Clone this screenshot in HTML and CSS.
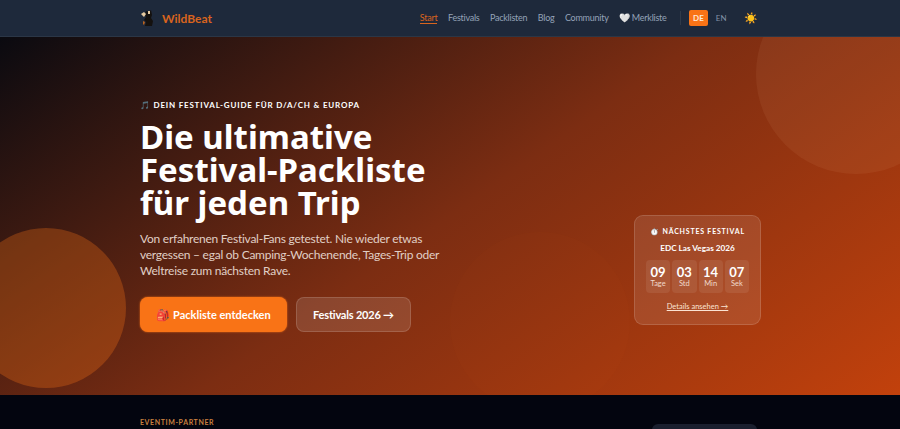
FILE: index.html
```html
<!DOCTYPE html>
<html lang="de">
<head>
  <meta charset="UTF-8">
  <meta name="viewport" content="width=device-width, initial-scale=1.0">
  <title>WildBeat</title>
  <link rel="stylesheet" href="styles.css">
</head>
<body>
  <header class="topbar">
    <div class="wrap topbar-inner">
      <a class="brand" href="#">
        <svg class="brand-logo" width="16" height="18" viewBox="0 0 16 18">
          <path d="M6 2l3 1 2-2 1 5-1 3 2 3-1 5H5l1-4-2-2 2-3-1-3z" fill="#14110f"/>
          <path d="M1 5l3-2 2 2-2 3zM8 2l2 0 0 3-2 0z" fill="#e6c9a0"/>
          <path d="M3 12l2 1-1 3-1-1z" fill="#b8621f"/>
        </svg>
        <span>WildBeat</span>
      </a>
      <nav class="nav">
        <a class="nav-link is-active" href="#">Start</a>
        <a class="nav-link" href="#">Festivals</a>
        <a class="nav-link" href="#">Packlisten</a>
        <a class="nav-link" href="#">Blog</a>
        <a class="nav-link" href="#">Community</a>
        <a class="nav-link" href="#"><span class="nav-emoji">🤍</span> Merkliste</a>
      </nav>
      <div class="topbar-sep"></div>
      <div class="lang">
        <span class="lang-btn is-on">DE</span>
        <span class="lang-btn">EN</span>
      </div>
      <span class="theme">☀️</span>
    </div>
  </header>

  <section class="hero">
    <div class="blob blob-right"></div>
    <div class="blob blob-left"></div>
    <div class="blob blob-mid"></div>
    <div class="wrap hero-inner">
      <div class="hero-copy">
        <p class="eyebrow">🎵 DEIN FESTIVAL-GUIDE FÜR D/A/CH &amp; EUROPA</p>
        <h1>Die ultimative Festival-Packliste für jeden Trip</h1>
        <p class="lead">Von erfahrenen Festival-Fans getestet. Nie wieder etwas vergessen – egal ob Camping-Wochenende, Tages-Trip oder Weltreise zum nächsten Rave.</p>
        <div class="hero-actions">
          <a class="btn btn-primary" href="#">🎒 Packliste entdecken</a>
          <a class="btn btn-ghost" href="#">Festivals 2026 →</a>
        </div>
      </div>
      <aside class="countdown">
        <div class="countdown-label">⏱️ NÄCHSTES FESTIVAL</div>
        <div class="countdown-name">EDC Las Vegas 2026</div>
        <div class="countdown-grid">
          <div class="cell"><b>09</b><span>Tage</span></div>
          <div class="cell"><b>03</b><span>Std</span></div>
          <div class="cell"><b>14</b><span>Min</span></div>
          <div class="cell"><b>07</b><span>Sek</span></div>
        </div>
        <a class="countdown-link" href="#">Details ansehen →</a>
      </aside>
    </div>
  </section>

  <section class="partner">
    <div class="wrap partner-inner">
      <p class="partner-label">EVENTIM-PARTNER</p>
      <div class="partner-card"></div>
    </div>
  </section>
</body>
</html>
```

FILE: styles.css
```css
* {
  box-sizing: border-box;
}

html, body {
  height: 429px;
  overflow: hidden;
}

body {
  margin: 0;
  font-family: Lato, "Noto Sans", sans-serif;
  background-color: #03050f;
  color: white;
}

a {
  color: inherit;
  text-decoration: none;
}

.wrap {
  width: 900px;
  padding: 0 140px;
}

/* top bar */
.topbar {
  height: 37px;
  background-color: #1e293b;
  border-bottom: 1px solid #2b3646;
}

.topbar-inner {
  height: 36px;
  display: flex;
  align-items: center;
}

.brand {
  display: flex;
  align-items: center;
  gap: 6px;
  color: #d9641e;
  font-weight: 700;
  font-size: 12px;
  margin-right: auto;
}

.nav {
  display: flex;
  gap: 10.5px;
  font-size: 9px;
  letter-spacing: -0.25px;
  color: #94a3b8;
}

.nav-link.is-active {
  color: #d9641e;
  border-bottom: 1px solid #d9641e;
}

.nav-emoji {
  color: white;
}

.topbar-sep {
  width: 1px;
  height: 14px;
  background-color: #2f3a4a;
  margin: 0 8px 0 13px;
}

.lang {
  display: flex;
  align-items: center;
  gap: 3px;
  font-size: 8px;
  color: #8492a6;
}

.lang-btn {
  padding: 3px 4.5px;
  border-radius: 2px;
}

.lang-btn.is-on {
  background-color: #f97316;
  color: #ffe9d6;
  font-weight: 700;
}

.theme {
  font-size: 11px;
  margin: 0 2px 0 13px;
}

/* hero */
.hero {
  position: relative;
  height: 358px;
  overflow: hidden;
  background: linear-gradient(145deg, #0a0a10 0%, #7c2d12 50%, #c2410c 100%);
}

.blob {
  position: absolute;
  border-radius: 50%;
  background-color: rgba(255, 200, 160, 0.07);
}

.blob-right {
  width: 200px;
  height: 200px;
  top: -63px;
  right: -56px;
}

.blob-left {
  width: 160px;
  height: 160px;
  top: 191px;
  left: -34px;
  background-color: rgba(249, 115, 22, 0.3);
}

.blob-mid {
  width: 180px;
  height: 180px;
  top: 195px;
  left: 450px;
  background-color: rgba(249, 115, 22, 0.025);
}

.hero-inner {
  position: relative;
  height: 100%;
  display: flex;
  align-items: center;
  justify-content: space-between;
}

.hero-copy {
  width: 310px;
}

.eyebrow {
  margin: 0 0 10px;
  font-size: 8px;
  font-weight: 700;
  letter-spacing: 0.8px;
}

h1 {
  margin: 0 0 12px;
  font-family: "Noto Sans", sans-serif;
  font-size: 33px;
  line-height: 33px;
  font-weight: 700;
}

.lead {
  margin: 0 0 18px;
  font-size: 12px;
  letter-spacing: -0.25px;
  line-height: 16px;
  color: #e0cfc5;
}

.hero-actions {
  display: flex;
  gap: 9px;
}

.btn {
  height: 35px;
  display: flex;
  align-items: center;
  justify-content: center;
  border-radius: 8px;
  font-size: 11px;
  font-weight: 700;
}

.btn-primary {
  width: 147px;
  background-color: #f97316;
  box-shadow: 0 0 2px #f97316;
}

.btn-ghost {
  width: 115px;
  letter-spacing: -0.2px;
  background-color: rgba(255, 255, 255, 0.12);
  border: 1px solid rgba(255, 255, 255, 0.14);
}

/* countdown card */
.countdown {
  align-self: flex-end;
  width: 127px;
  height: 110px;
  margin: 0 -1px 70px 0;
  padding: 10px 11px;
  border-radius: 9px;
  text-align: center;
  background-color: rgba(255, 255, 255, 0.1);
  border: 1px solid rgba(255, 255, 255, 0.14);
}

.countdown-label {
  font-size: 7px;
  line-height: 10px;
  font-weight: 700;
  letter-spacing: 0.8px;
  white-space: nowrap;
  margin-bottom: 7px;
}

.countdown-name {
  font-size: 8.2px;
  line-height: 10px;
  font-weight: 700;
  margin-bottom: 7px;
}

.countdown-grid {
  display: grid;
  grid-template-columns: repeat(4, 1fr);
  gap: 2px;
  margin-bottom: 9px;
}

.cell {
  height: 33px;
  padding-top: 5px;
  border-radius: 4px;
  background-color: rgba(255, 255, 255, 0.08);
}

.cell b {
  display: block;
  font-size: 13px;
  line-height: 14px;
}

.cell span {
  display: block;
  font-size: 7.5px;
  line-height: 10px;
  color: #f0d9cc;
}

.countdown-link {
  display: block;
  font-size: 7.5px;
  line-height: 10px;
  color: #fbe3d3;
  text-decoration: underline;
}

/* partner strip */
.partner-inner {
  display: flex;
  justify-content: space-between;
}

.partner-label {
  margin: 23px 0 0;
  font-size: 7px;
  font-weight: 700;
  letter-spacing: 0.6px;
  color: #c9803f;
}

.partner-card {
  width: 105px;
  height: 10px;
  margin: 29px 3px 0 0;
  border-radius: 6px 6px 0 0;
  background-color: #1a1f2e;
}
```
